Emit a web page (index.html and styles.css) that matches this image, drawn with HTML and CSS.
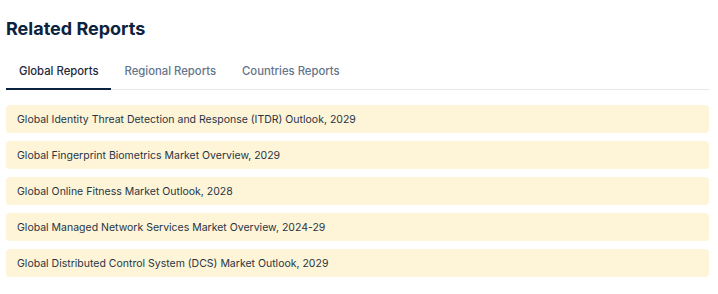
FILE: index.html
```html
<!DOCTYPE html>
<html lang="en">

<head>
  <meta charset="UTF-8">
  <meta name="viewport" content="width=device-width, initial-scale=1.0">
  <title>Related Reports</title>
  <link rel="stylesheet" href="styles.css">
</head>

<body>
  <div class="related">
    <h2 class="related-title">Related Reports</h2>
    <ul class="tab-header">
      <li class="tab-header-active">Global Reports</li>
      <li>Regional Reports</li>
      <li>Countries Reports</li>
    </ul>
    <ul class="report-list">
      <li>Global Identity Threat Detection and Response (ITDR) Outlook, 2029</li>
      <li>Global Fingerprint Biometrics Market Overview, 2029</li>
      <li>Global Online Fitness Market Outlook, 2028</li>
      <li>Global Managed Network Services Market Overview, 2024-29</li>
      <li>Global Distributed Control System (DCS) Market Outlook, 2029</li>
    </ul>
  </div>
</body>

</html>
```

FILE: styles.css
```css
* {
  margin: 0;
  padding: 0;
  box-sizing: border-box;
}

ul {
  list-style-type: none;
}

body {
  font-family: Inter, "Noto Sans", sans-serif;
  background: #fff;
}

.related {
  padding: 18px 9px 0 6px;
}

.related-title {
  font-size: 18px;
  line-height: 22px;
  font-weight: 700;
  color: #0c2340;
}

.tab-header {
  display: flex;
  margin-top: 12px;
  border-bottom: 1px solid #e5e7eb;
}

.tab-header li {
  padding: 9px 13px 7px;
  font-size: 11.3px;
  line-height: 20px;
  font-weight: 500;
  color: #64748b;
  border-bottom: 2px solid transparent;
  margin-bottom: -1px;
}

.tab-header .tab-header-active {
  color: #1e293b;
  border-bottom-color: #0c2340;
}

.report-list {
  display: flex;
  flex-direction: column;
  gap: 8px;
  margin-top: 15px;
}

.report-list li {
  height: 28px;
  padding: 0 11px;
  display: flex;
  align-items: center;
  background: #fef4d8;
  border-radius: 4px;
  font-size: 10.5px;
  color: #283444;
}
```
